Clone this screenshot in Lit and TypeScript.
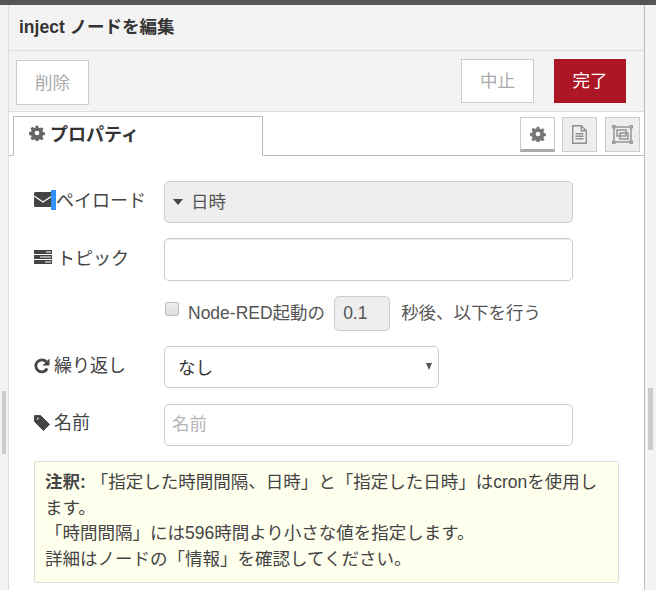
import { LitElement, html, css } from "lit";
import { customElement } from "lit/decorators.js";

const gear = (size: number, color: string) => html`<svg width=${size} height=${size} viewBox="0 0 16 16" fill=${color}><path fill-rule="evenodd" d="M6.700 0.800h2.600l.4 2 1.300.55 1.700-1.150 1.850 1.850-1.150 1.700.55 1.300 2 .4v2.600l-2 .4-.55 1.300 1.150 1.700-1.850 1.850-1.700-1.150-1.300.55-.4 2H6.700l-.4-2-1.300-.55-1.700 1.150-1.850-1.850 1.150-1.700-.55-1.300-2-.4V7.050l2-.4.55-1.300-1.150-1.700L3.300 1.800 5 2.950l1.300-.55zM8 5.700a2.300 2.300 0 1 0 0 4.600 2.300 2.300 0 0 0 0-4.600z"/></svg>`;

@customElement("app-root")
export class AppRoot extends LitElement {
  static styles = css`
    :host { display: block; width: 656px; height: 590px; overflow: hidden; position: relative; background: #f3f3f3;
      font-family: "Liberation Sans", "Noto Sans CJK JP", sans-serif; font-size: 17.5px; color: #444; }
    * { box-sizing: border-box; }
    .topbar { height: 5px; background: #555; }
    .shell { display: flex; height: 585px; }
    .side { flex: 0 0 8px; }
    .sideR { flex: 0 0 11px; }
    .panel { flex: 0 0 637px; border-left: 1px solid #ddd; border-right: 1px solid #bbb; display: flex; flex-direction: column; background: #fff; overflow: hidden; }
    .title { height: 46px; flex: none; background: #f3f3f3; border-bottom: 1px solid #ddd; padding: 0 0 4px 10px; display: flex; align-items: center;
      font-size: 17.5px; font-weight: 700; color: #333; }
    .tray { height: 61px; flex: none; background: #f3f3f3; border-bottom: 1px solid #ddd; display: flex; padding: 8px 18px 0 7px; }
    .btn { width: 73px; height: 44px; border: 1px solid #ccc; background: #fff; color: #aaa; display: flex; align-items: center; justify-content: center; padding-bottom: 3px; }
    .del { margin-top: 1px; height: 45px; }
    .spacer { flex: 1; }
    .primary { background: #ad1625; border-color: #ad1625; color: #fff; margin-left: 20px; width: 72px; }
    .tabs { height: 44px; flex: none; border-bottom: 1px solid #bbb; display: flex; padding: 4px 4px 0 4px; }
    .tab { width: 250px; height: 40px; border: 1px solid #bbb; border-bottom: 1px solid #fff; background: #fff; display: flex; align-items: center; gap: 5px; padding: 0 0 6px 15px;
      font-weight: 700; font-size: 18px; color: #333; }
    .tabicons { display: flex; gap: 7px; padding-top: 1px; height: 36px; }
    .ibtn { width: 35px; height: 35px; border: 1px solid #ccc; background: #eee; display: flex; align-items: center; justify-content: center; }
    .ibtn:last-child { margin-left: 1px; }
    .ibtn.on { background: #fff; border-bottom: 3px solid #aaa; }
    .form { padding: 25px 25px 0 25px; display: flex; flex-direction: column; }
    .row { display: flex; align-items: center; }
    .label { width: 130px; display: flex; align-items: center; gap: 4px; color: #444; font-size: 18px; padding-bottom: 6px; position: relative; }
    .label svg { flex: none; }
    .lift { padding-bottom: 8px; }
    .down { margin-top: 3px; }
    .caret { position: absolute; left: 17px; top: 4px; width: 5px; height: 20px; background: #3090ff; }
    .field { width: 409px; height: 42px; border: 1px solid #ccc; border-radius: 5px; background: #fff; display: flex; align-items: center; padding: 0 7px 2px; }
    .typed { background: #eee; color: #555; padding-left: 8px; gap: 8px; padding-bottom: 3px; }
    .tri { width: 0; height: 0; border: 5px solid transparent; border-top: 6px solid #444; border-bottom: 0; margin-top: 2px; }
    .topicrow { margin-top: 15px; }
    .topic { height: 43px; box-shadow: inset 0 1px 1px rgba(0,0,0,.075); }
    .check { height: 35px; margin-top: 15px; padding-left: 131px; display: flex; align-items: center; color: #555; }
    .t { margin-bottom: 5px; }
    .box { width: 14px; height: 14px; border: 1px solid #bbb; border-radius: 2px; background: linear-gradient(#eee,#ddd); margin-right: 9px; margin-bottom: 9px; }
    .num { width: 56px; height: 35px; border: 1px solid #ccc; border-radius: 5px; background: #eee; margin: 0 11px 0 9px; display: flex; align-items: center; padding-left: 8px; color: #555; }
    .repeat { margin-top: 15px; }
    .sel { width: 275px; height: 42px; position: relative; padding-left: 13px; color: #333; }
    .arrow { position: absolute; right: 6px; top: 16px; width: 0; height: 0; border: 3.5px solid transparent; border-top: 7px solid #555; border-bottom: 0; }
    .name { margin-top: 16px; }
    .ph { color: #b4b4b4; padding-bottom: 6px; }
    .tip { margin-top: 15px; width: 585px; height: 122px; border: 1px solid #ddd; border-radius: 2px; background: #ffe; padding: 8px 10px; line-height: 25.5px; color: #444; }
    .thumbL { position: absolute; left: 2px; top: 391px; width: 4px; height: 63px; background: #ccc; }
    .thumbR { position: absolute; left: 648px; top: 388px; width: 5px; height: 62px; background: #ccc; }
  `;

  render() {
    return html`
      <div class="topbar"></div>
      <div class="shell">
        <div class="side"></div>
        <div class="panel">
          <div class="title">inject ノードを編集</div>
          <div class="tray">
            <div class="btn del">削除</div>
            <div class="spacer"></div>
            <div class="btn">中止</div>
            <div class="btn primary">完了</div>
          </div>
          <div class="tabs">
            <div class="tab">${gear(16, "#666")}プロパティ</div>
            <div class="spacer"></div>
            <div class="tabicons">
              <div class="ibtn on">${gear(16, "#777")}</div>
              <div class="ibtn">
                <svg width="15" height="19" viewBox="0 0 15 19" fill="none" stroke="#8f8f8f" stroke-width="1.400"><path d="M.7.7h8.500l5.100 5.100v12.500H.7zM9.200.7v5.100h5.100M3.500 8.800h8M3.500 11.300h8M3.500 13.800h8"/></svg>
              </div>
              <div class="ibtn">
                <svg width="21" height="19" viewBox="0 0 21 19" fill="none" stroke="#8f8f8f" stroke-width="1.400"><rect x="2" y="2" width="17" height="15"/><rect x="5" y="5" width="9" height="6"/><rect x="8" y="8" width="8" height="6"/><g fill="#aaa" stroke="#999" stroke-width="1"><rect x=".5" y=".5" width="2.500" height="2.500"/><rect x="18" y=".5" width="2.500" height="2.500"/><rect x=".5" y="16" width="2.500" height="2.500"/><rect x="18" y="16" width="2.500" height="2.500"/></g></svg>
              </div>
            </div>
          </div>
          <div class="form">
            <div class="row">
              <div class="label">
                <svg width="18" height="15" viewBox="0 0 18 15"><rect width="18" height="15" rx="1.500" fill="#444"/><path d="M0 4l9 6 9-6" fill="none" stroke="#fff" stroke-width="1.200"/></svg>
                <span class="caret"></span>
                <span>ペイロード</span>
              </div>
              <div class="field typed"><span class="tri"></span><span>日時</span></div>
            </div>
            <div class="row topicrow">
              <div class="label">
                <svg width="18" height="14" viewBox="0 0 18 14" fill="#444"><path fill-rule="evenodd" d="M0 0h18v4H0zM12 1.500v1h5v-1zM0 5h18v4H0zM6 6.500v1h11v-1zM0 10h18v4H0zM11 11.500v1h6v-1z"/></svg>
                <span style="margin-left:1px">トピック</span>
              </div>
              <div class="field topic"></div>
            </div>
            <div class="check">
              <span class="box"></span><span class="t">Node-RED起動の</span><span class="num">0.1</span><span class="t">秒後、以下を行う</span>
            </div>
            <div class="row repeat">
              <div class="label">
                <svg class="down" width="16" height="16" viewBox="0 0 16 16"><path d="M13.200 10.500A6 6 0 1 1 12.300 3.800" fill="none" stroke="#444" stroke-width="2.800"/><path d="M15.500 .5v7H8.500z" fill="#444"/></svg>
                <span>繰り返し</span>
              </div>
              <div class="field sel">なし<span class="arrow"></span></div>
            </div>
            <div class="row name">
              <div class="label lift">
                <svg class="down" width="16" height="16" viewBox="0 0 16 16" fill="#444" stroke="#444" stroke-linejoin="round"><path fill-rule="evenodd" d="M.6.6h6l8.800 8.800-6 6L.6 6.600zM3.800 2.500a1.300 1.300 0 1 0 0 2.600 1.300 1.300 0 0 0 0-2.600z"/></svg>
                <span>名前</span>
              </div>
              <div class="field ph">名前</div>
            </div>
            <div class="tip"><b>注釈:</b> 「指定した時間間隔、日時」と「指定した日時」はcronを使用します。<br>「時間間隔」には596時間より小さな値を指定します。<br>詳細はノードの「情報」を確認してください。</div>
          </div>
        </div>
        <div class="sideR"></div>
      </div>
      <div class="thumbL"></div>
      <div class="thumbR"></div>
    `;
  }
}
